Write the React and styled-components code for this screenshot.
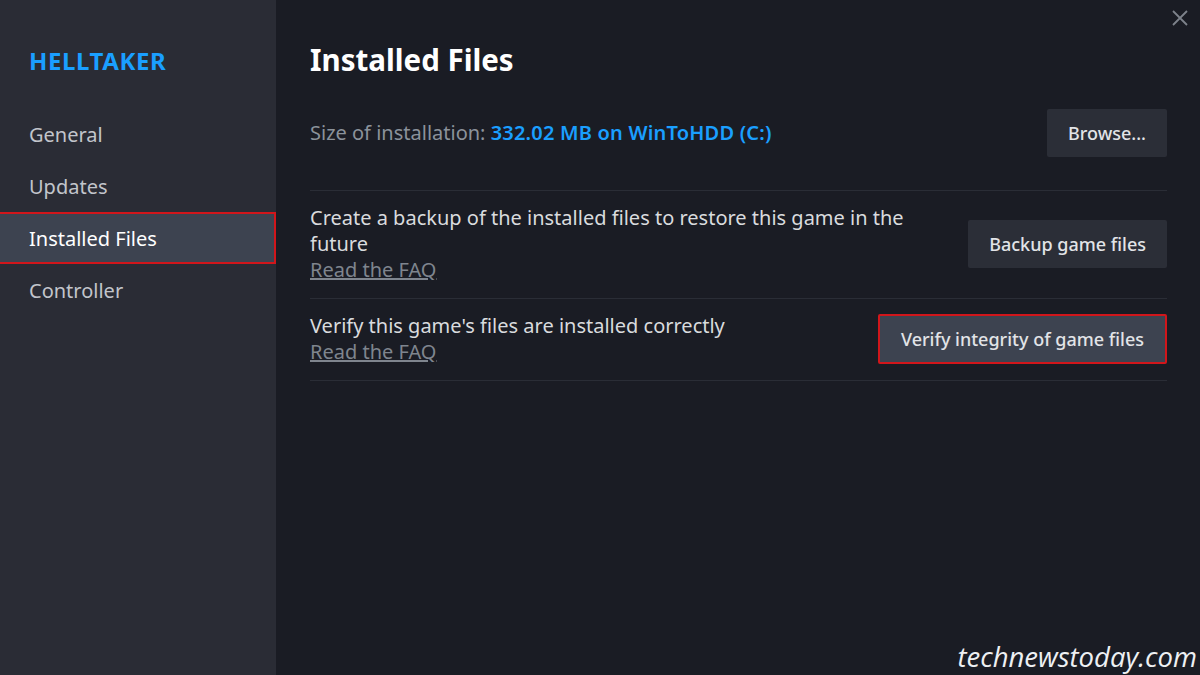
import React from "react";
import styled, { createGlobalStyle } from "styled-components";

const GlobalStyle = createGlobalStyle`
  html, body {
    margin: 0;
    padding: 0;
    background: #1b1d25;
  }
  body {
    font-family: "Noto Sans", "Open Sans", sans-serif;
  }
`;

const Window = styled.div`
  position: relative;
  display: flex;
  width: 1200px;
  height: 675px;
  overflow: hidden;
  background-color: #1a1c24;
`;

const Sidebar = styled.div`
  width: 276px;
  flex-shrink: 0;
  background-color: #2a2c35;
  padding-top: 44px;
  box-sizing: border-box;
`;

const GameTitle = styled.div`
  padding-left: 29px;
  font-size: 24px;
  font-weight: 700;
  letter-spacing: 0.6px;
  color: #1a9fff;
  line-height: 34px;
  margin-bottom: 30px;
`;

const NavItem = styled.div`
  height: 52px;
  display: flex;
  align-items: center;
  padding-left: 29px;
  box-sizing: border-box;
  font-size: 20px;
  color: ${(p) => (p.$active ? "#ffffff" : "#c2c5cb")};
  background-color: ${(p) => (p.$active ? "#3d4350" : "transparent")};
  border: ${(p) => (p.$active ? "2px solid #d1161b" : "2px solid transparent")};
  border-left: none;
`;

const Main = styled.div`
  flex: 1;
  padding: 40px 33px 0 34px;
`;

const Heading = styled.h1`
  margin: 0 0 29px 0;
  font-size: 29.5px;
  font-weight: 700;
  color: #ffffff;
  line-height: 40px;
`;

const Row = styled.div`
  display: flex;
  align-items: center;
  justify-content: space-between;
  gap: 40px;
  padding: ${(p) => p.$pad || "14px 0 15px 0"};
  border-bottom: 1px solid #2a2d36;
`;

const Label = styled.div`
  font-size: 20px;
  line-height: 26px;
  color: #d9dbde;
  max-width: 600px;
`;

const SizeLabel = styled.span`
  color: #8b929b;
`;

const SizeValue = styled.span`
  color: #1a9fff;
  font-weight: 600;
  letter-spacing: 0.2px;
`;

const FaqLink = styled.a`
  display: block;
  color: #7f858e;
  text-decoration: underline;
  font-size: 20px;
  line-height: 26px;
`;

const Button = styled.button`
  flex-shrink: 0;
  font-family: inherit;
  font-size: 18px;
  font-weight: 500;
  color: #e2e4e7;
  height: ${(p) => (p.$hl ? "50px" : "48px")};
  padding: 0 ${(p) => (p.$hl ? "21px" : "21px")};
  background-color: ${(p) => (p.$hl ? "#3d4350" : "#2b2e37")};
  border: ${(p) => (p.$hl ? "2px solid #d1161b" : "none")};
  border-radius: 2px;
  cursor: pointer;
`;

const CloseIcon = styled.svg`
  position: absolute;
  top: 9px;
  right: 11px;
`;

const Watermark = styled.div`
  position: absolute;
  right: 3px;
  bottom: 0;
  font-family: "Open Sans", sans-serif;
  font-style: italic;
  font-size: 27.5px;
  color: #eef0f3;
`;

function App() {
  return (
    <>
      <GlobalStyle />
      <Window>
        <Sidebar>
          <GameTitle>HELLTAKER</GameTitle>
          <NavItem>General</NavItem>
          <NavItem>Updates</NavItem>
          <NavItem $active>Installed Files</NavItem>
          <NavItem>Controller</NavItem>
        </Sidebar>
        <Main>
          <Heading>Installed Files</Heading>
          <Row $pad="0 0 33px 0">
            <Label>
              <SizeLabel>Size of installation: </SizeLabel>
              <SizeValue>332.02 MB on WinToHDD (C:)</SizeValue>
            </Label>
            <Button>Browse...</Button>
          </Row>
          <Row>
            <div>
              <Label>Create a backup of the installed files to restore this game in the future</Label>
              <FaqLink>Read the FAQ</FaqLink>
            </div>
            <Button>Backup game files</Button>
          </Row>
          <Row>
            <div>
              <Label>Verify this game's files are installed correctly</Label>
              <FaqLink>Read the FAQ</FaqLink>
            </div>
            <Button $hl>Verify integrity of game files</Button>
          </Row>
        </Main>
        <CloseIcon width="18" height="18" viewBox="0 0 18 18">
          <path d="M2 2 L16 16 M16 2 L2 16" stroke="#7d828b" strokeWidth="1.8" />
        </CloseIcon>
        <Watermark>technewstoday.com</Watermark>
      </Window>
    </>
  );
}

export default App;
